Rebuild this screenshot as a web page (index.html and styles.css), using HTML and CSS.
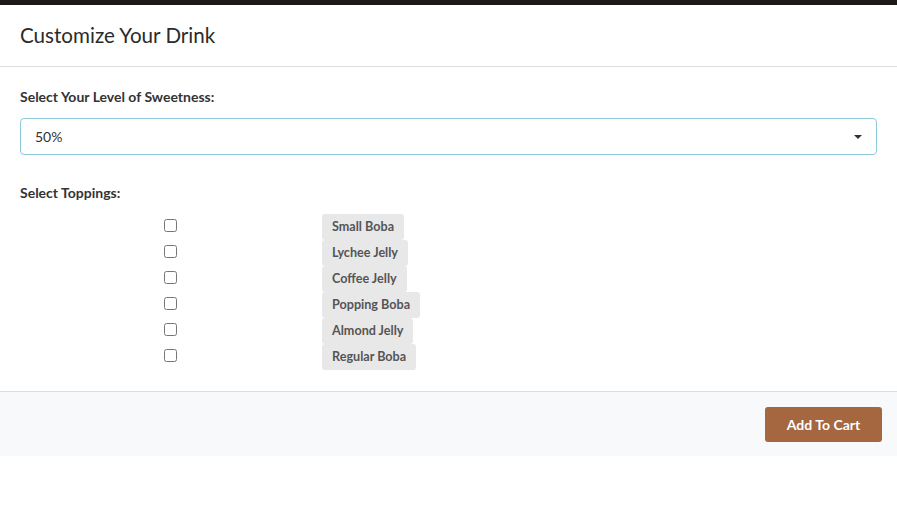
FILE: index.html
```html
<!DOCTYPE html>
<html>
<head>
<meta charset="utf-8">
<link rel="stylesheet" href="styles.css">
</head>
<body>
<div class="backdrop"></div>
<div class="modal">
  <div class="modal-header">
    <h2 class="modal-title">Customize Your Drink</h2>
  </div>
  <div class="modal-body">
    <div class="field-label">Select Your Level of Sweetness:</div>
    <div class="select">
      <span class="select-value">50%</span>
      <span class="caret"></span>
    </div>
    <div class="field-label toppings-label">Select Toppings:</div>
    <div class="toppings">
      <div class="check-cell"><input type="checkbox"></div><div class="badge-cell"><span class="badge">Small Boba</span></div>
      <div class="check-cell"><input type="checkbox"></div><div class="badge-cell"><span class="badge">Lychee Jelly</span></div>
      <div class="check-cell"><input type="checkbox"></div><div class="badge-cell"><span class="badge">Coffee Jelly</span></div>
      <div class="check-cell"><input type="checkbox"></div><div class="badge-cell"><span class="badge">Popping Boba</span></div>
      <div class="check-cell"><input type="checkbox"></div><div class="badge-cell"><span class="badge">Almond Jelly</span></div>
      <div class="check-cell"><input type="checkbox"></div><div class="badge-cell"><span class="badge">Regular Boba</span></div>
    </div>
  </div>
  <div class="modal-footer">
    <button class="btn-cart">Add To Cart</button>
  </div>
</div>
</body>
</html>
```
FILE: styles.css
```css
html, body {
  margin: 0;
  padding: 0;
  background: #ffffff;
  font-family: Lato, "Open Sans", sans-serif;
  color: #333333;
}
.backdrop {
  height: 5px;
  background: #1d1a17;
}
.modal {
  background: #ffffff;
}
.modal-header {
  height: 62px;
  border-bottom: 1px solid #dddddd;
  display: flex;
  align-items: center;
  padding: 0 20px;
  box-sizing: border-box;
}
.modal-title {
  margin: 0;
  font-size: 20.6px;
  font-weight: 400;
  color: #2b2b2b;
  padding-bottom: 1px;
}
.modal-body {
  padding: 21px 20px 21px 20px;
}
.field-label {
  font-size: 14px;
  font-weight: 700;
  color: #333333;
  line-height: 17px;
}
.select {
  margin-top: 13px;
  height: 37px;
  box-sizing: border-box;
  border: 1px solid #8ecbdc;
  border-radius: 4px;
  display: flex;
  align-items: center;
  justify-content: space-between;
  padding: 0 14px 0 14px;
}
.select-value {
  font-size: 14px;
  color: #333333;
}
.caret {
  width: 0;
  height: 0;
  border-left: 4px solid transparent;
  border-right: 4px solid transparent;
  border-top: 4px solid #333333;
  margin-top: 1px;
}
.toppings-label {
  margin-top: 29px;
}
.toppings {
  margin-top: 13px;
  display: grid;
  grid-template-columns: 300px auto;
  grid-auto-rows: 26px;
}
.check-cell {
  display: flex;
  justify-content: center;
  align-items: flex-start;
}
.check-cell input {
  margin: 5px 0 0 0;
  width: 13px;
  height: 13px;
}
.badge-cell {
  padding-left: 2px;
}
.badge {
  display: inline-block;
  height: 26px;
  line-height: 26px;
  padding: 0 10px;
  background: #e8e8e8;
  border-radius: 3px;
  font-size: 12.6px;
  font-weight: 700;
  color: #555555;
}
.modal-footer {
  border-top: 1px solid #dddddd;
  background: #f8f9fa;
  height: 65px;
  box-sizing: border-box;
  display: flex;
  justify-content: flex-end;
  align-items: center;
  padding-right: 15px;
}
.btn-cart {
  width: 117px;
  height: 35px;
  background: #a5673f;
  border: none;
  border-radius: 3px;
  color: #ffffff;
  font-family: Lato, sans-serif;
  font-weight: 700;
  font-size: 14px;
}
```
